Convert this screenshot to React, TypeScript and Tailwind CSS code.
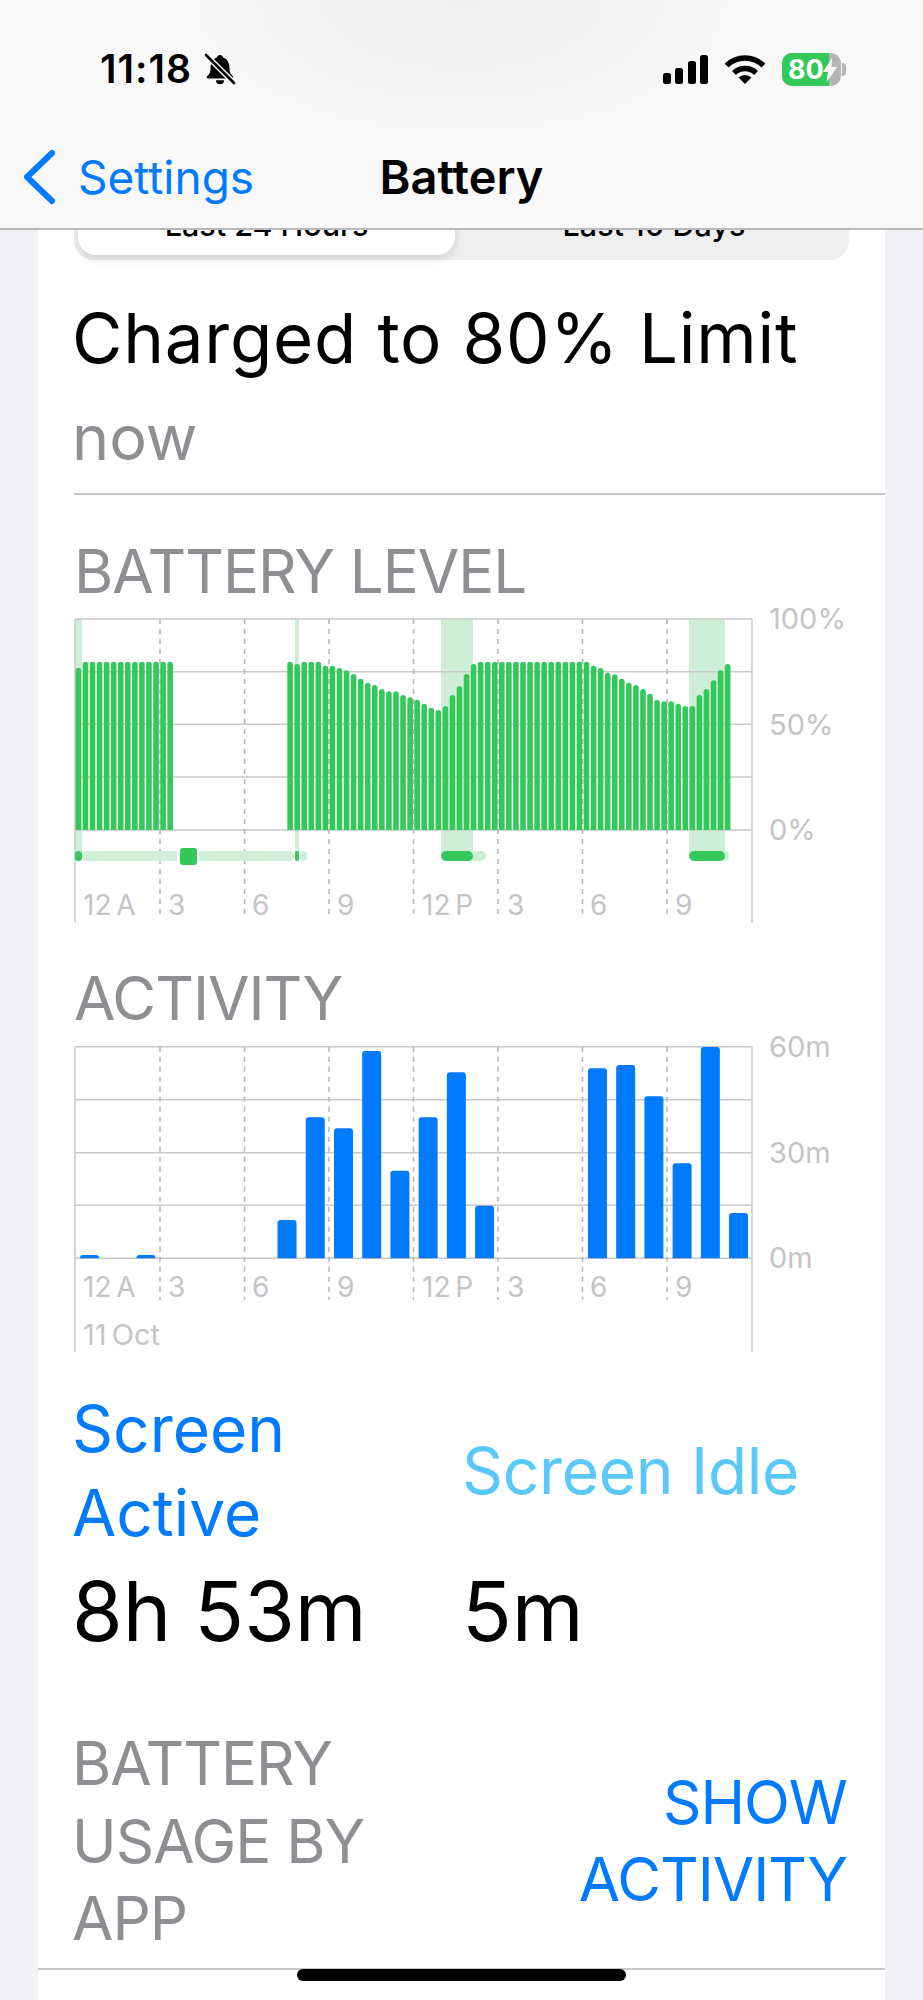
const GREEN = '#34c759';
const LIGHT_GREEN = '#ceefd6';
const BLUE = '#007aff';
const GRID = '#c9c9cb';
const DASH = '#b4b4b7';
const LABEL = '#c4c4c6';

// top edge of each battery bar, in page pixels (null = phone was off)
const levelTops: (number | null)[] = [
  203, 185, 185, 185, 185, 185, 185, 185, 185, 185, 185, 185, 185, 185,
  null, null, null, null, null, null, null, null, null, null, null, null, null, null, null, null,
  185, 192, 185, 185, 185, 197, 197, 204, 211, 222, 236, 248, 255, 267, 274, 274, 285, 292, 299, 311, 323, 330, 318, 285, 259, 222,
  192, 185, 185, 185, 185, 185, 185, 185, 185, 185, 185, 185, 185, 185, 185, 185, 185,
  197, 204, 218, 223, 236, 248, 255, 267, 281, 300, 304, 304, 311, 318, 318, 285, 267, 241, 211, 192,
].map((v) => (v === null ? null : 600 + v / 3));

// index into the 24 hour slots, top edge of the bar
const activityBars: [number, number][] = [
  [0, 675], [2, 675], [7, 570], [8, 262], [9, 295], [10, 63], [11, 422], [12, 262], [13, 127], [14, 527],
  [18, 115], [19, 105], [20, 199], [21, 400], [22, 51], [23, 549],
];

const hours = [160, 244.5, 329, 413.5, 498, 582.5, 667];
const hourLabels: [string, number][] = [
  ['12 A', 83], ['3', 168], ['6', 252], ['9', 337], ['12 P', 422], ['3', 507], ['6', 590], ['9', 675],
];

function ChartFrame({ top, bottom, end, dashEnd, grids }: { top: number; bottom: number; end: number; dashEnd: number; grids: number[] }) {
  return (
    <g>
      {[top, ...grids, bottom].map((y) => (
        <line key={y} x1={75} x2={752} y1={y} y2={y} stroke={GRID} strokeWidth={1.5} />
      ))}
      <line x1={75} x2={75} y1={top} y2={end} stroke={GRID} strokeWidth={1.5} />
      <line x1={752} x2={752} y1={top} y2={end} stroke={GRID} strokeWidth={1.5} />
      {hours.map((x) => (
        <line key={x} x1={x} x2={x} y1={top} y2={dashEnd} stroke={DASH} strokeWidth={1.5} strokeDasharray="5 5" />
      ))}
    </g>
  );
}

function ChartText({ x, y, size = 28, children }: { x: number; y: number; size?: number; children: string }) {
  return (
    <text x={x} y={y} fill={LABEL} fontSize={size} wordSpacing={-3} fontFamily="Inter, sans-serif">
      {children}
    </text>
  );
}

function BatteryChart() {
  return (
    <svg viewBox="74 601 811 329" className="block w-[811px] h-[329px]">
      <rect x={75} y={619} width={7} height={237} fill={LIGHT_GREEN} />
      <rect x={295} y={619} width={4} height={237} fill={LIGHT_GREEN} />
      <rect x={441} y={619} width={32} height={237} fill={LIGHT_GREEN} />
      <rect x={689} y={619} width={36} height={237} fill={LIGHT_GREEN} />
      <ChartFrame top={619} bottom={830} end={923} dashEnd={919} grids={[671.7, 724.3, 777]} />
      {levelTops.map((t, i) =>
        t === null ? null : (
          <path
            key={i}
            d={`M${75.6 + 7.057 * i} 830V${t + 2.8}a2.8 2.8 0 0 1 5.6 0V830z`}
            fill={GREEN}
          />
        ),
      )}
      {/* charging strip */}
      <rect x={82} y={851} width={212} height={10} rx={5} fill={LIGHT_GREEN} />
      <rect x={300} y={851} width={7} height={10} rx={4} fill={LIGHT_GREEN} />
      <rect x={466} y={851} width={20} height={10} rx={5} fill={LIGHT_GREEN} />
      <rect x={720} y={851} width={9} height={10} rx={4} fill={LIGHT_GREEN} />
      <rect x={75} y={851} width={7} height={10} rx={3.5} fill={GREEN} />
      <rect x={295} y={851} width={4} height={10} rx={2} fill={GREEN} />
      <rect x={441} y={851} width={32} height={10} rx={5} fill={GREEN} />
      <rect x={689} y={851} width={36} height={10} rx={5} fill={GREEN} />
      <rect x={177} y={845} width={22} height={22} fill="#fff" />
      <rect x={180} y={848} width={17} height={17} rx={3} fill={GREEN} />
      {hourLabels.map(([t, x]) => (
        <ChartText key={x} x={x} y={915}>{t}</ChartText>
      ))}
      <ChartText x={769} y={629} size={29}>100%</ChartText>
      <ChartText x={769} y={735} size={29}>50%</ChartText>
      <ChartText x={769} y={840} size={29}>0%</ChartText>
    </svg>
  );
}

function ActivityChart() {
  return (
    <svg viewBox="74 1028 811 332" className="block w-[811px] h-[332px]">
      <ChartFrame top={1046.7} bottom={1258.3} end={1352} dashEnd={1300} grids={[1099.7, 1152.7, 1205.3]} />
      {activityBars.map(([i, top]) => {
        const x = 80 + 28.22 * i;
        const y = 1030 + top / 3;
        const r = Math.min(3, 1258.3 - y);
        return (
          <path
            key={i}
            d={`M${x} 1258.3V${y + r}a${r} ${r} 0 0 1 ${r} ${-r}h${19 - 2 * r}a${r} ${r} 0 0 1 ${r} ${r}V1258.3z`}
            fill={BLUE}
          />
        );
      })}
      {hourLabels.map(([t, x]) => (
        <ChartText key={x} x={x} y={1297}>{t}</ChartText>
      ))}
      <ChartText x={83} y={1345} size={29}>11 Oct</ChartText>
      <ChartText x={769} y={1057} size={29}>60m</ChartText>
      <ChartText x={769} y={1163} size={29}>30m</ChartText>
      <ChartText x={769} y={1268} size={29}>0m</ChartText>
    </svg>
  );
}

function BellSlash() {
  return (
    <svg viewBox="0 0 32 32" className="w-[32px] h-[32px]">
      <path d="M16 2c-1.7 0-2.8 1.1-3 2.6C8.2 6 6.5 10.5 6.5 16c0 3-.9 5-3.3 7.2-.9.9-.3 2.3 1 2.3h23.6c1.3 0 1.9-1.4 1-2.3-2.4-2.2-3.3-4.2-3.3-7.2 0-5.5-1.7-10-6.5-11.4C18.8 3.1 17.7 2 16 2z" fill="#000" />
      <path d="M12 27.2a4 4 0 0 0 8 0z" fill="#000" />
      <line x1={1} y1={1} x2={31} y2={31} stroke="#f8f8f8" strokeWidth={5.5} />
      <line x1={2} y1={2} x2={30} y2={30} stroke="#000" strokeWidth={2.6} strokeLinecap="round" />
    </svg>
  );
}

function Signal() {
  return (
    <div className="flex items-end gap-[4.5px] h-[29px]">
      <div className="w-[8px] h-[11px] rounded-[2.5px] bg-black" />
      <div className="w-[8px] h-[16px] rounded-[2.5px] bg-black" />
      <div className="w-[8px] h-[23px] rounded-[2.5px] bg-black" />
      <div className="w-[8px] h-[29px] rounded-[2.5px] bg-black" />
    </div>
  );
}

function Wifi() {
  return (
    <svg viewBox="0 0 40 29" className="w-[40px] h-[29px]">
      <path d="M20 29L13.6 22.6A9 9 0 0 1 26.4 22.6z" fill="#000" />
      <path d="M9 18A15.5 15.5 0 0 1 31 18" fill="none" stroke="#000" strokeWidth={5.5} />
      <path d="M1.6 10.6A26 26 0 0 1 38.4 10.6" fill="none" stroke="#000" strokeWidth={5.5} />
    </svg>
  );
}

function BatteryIcon() {
  return (
    <div className="flex items-center">
      <div className="relative flex w-[59px] h-[33px] rounded-[10px] overflow-hidden bg-[#b5b5b5]">
        <div className="w-[47px] bg-[#34c759] flex items-center pl-[6px] text-white text-[27px] font-bold leading-none">
          80
        </div>
        <svg viewBox="0 0 14 24" className="absolute left-[41px] top-[5px] w-[14px] h-[24px]">
          <path d="M9 0L0 14h5L3.5 24 14 9H8.5z" fill="#fff" />
        </svg>
      </div>
      <div className="ml-[1px] w-[4px] h-[13px] rounded-r-full bg-[#b5b5b5]" />
    </div>
  );
}

function NavBar() {
  return (
    <header className="relative z-10 h-[230px] border-b-2 border-[#b8b8ba] bg-[radial-gradient(ellipse_at_50%_0%,_#efefef_0%,_#f8f8f8_45%,_#f9f9f9_100%)]">
      <div className="flex items-center justify-between pt-[49px] pl-[100px] pr-[77px] h-[89px]">
        <div className="flex items-center gap-[12px]">
          <span className="text-[39px] leading-[40px] font-semibold tracking-[1px] text-black">11:18</span>
          <BellSlash />
        </div>
        <div className="flex items-center gap-[17px]">
          <Signal />
          <Wifi />
          <BatteryIcon />
        </div>
      </div>
      <div className="mt-[60px] grid grid-cols-[1fr_auto_1fr] items-center h-[50px]">
        <div className="flex items-center pl-[22px]">
          <svg viewBox="0 0 34 56" className="w-[34px] h-[56px]">
            <polyline points="30,4 5,28 30,52" fill="none" stroke={BLUE} strokeWidth={6} strokeLinecap="round" strokeLinejoin="round" />
          </svg>
          <span className="ml-[22px] text-[46px] leading-[50px] text-[#007aff]">Settings</span>
        </div>
        <span className="text-[47px] leading-[50px] font-semibold text-black">Battery</span>
        <div />
      </div>
    </header>
  );
}

export default function App() {
  return (
    <div className="relative flex flex-col w-[923px] h-[2000px] overflow-hidden bg-[#f2f2f7] font-['Inter',sans-serif]">
      <NavBar />
      <main className="flex-1 mx-[38px] -mt-[39px] bg-white pl-[36px]">
        {/* Segmented control, mostly scrolled under the nav bar */}
        <div className="mr-[36px] h-[69px] rounded-b-[20px] bg-[#eeeeef] p-[4px] pb-[5px] flex text-[30.5px] font-medium text-black">
          <div className="w-[377px] rounded-[18px] bg-white shadow-[0_4px_8px_rgba(0,0,0,0.12)] flex items-center justify-center">
            Last 24 Hours
          </div>
          <div className="flex-1 flex items-center justify-center pl-[8px]">Last 10 Days</div>
        </div>

        <h1 className="mt-[38px] -ml-[2px] text-[69px] leading-[80px] font-normal text-black tracking-[0.8px]">Charged to 80% Limit</h1>
        <p className="mt-[19px] -ml-[2px] text-[63px] leading-[80px] text-[#8e8e93]">now</p>
        <div className="mt-[16px] h-[2px] bg-[#c6c6c8]" />

        <h2 className="mt-[46px] text-[60px] leading-[60px] tracking-[-1px] text-[#8e8e93]">BATTERY LEVEL</h2>
        <BatteryChart />

        <h2 className="mt-[38px] text-[60px] leading-[60px] tracking-[-1px] text-[#8e8e93]">ACTIVITY</h2>
        <ActivityChart />

        <div className="mt-[27px] -ml-[2px] grid grid-cols-[390px_1fr]">
          <div className="w-[260px] text-[64px] leading-[84px] text-[#007aff]">Screen Active</div>
          <div className="self-center text-[64px] leading-[84px] tracking-[-0.3px] text-[#5ac8fa]">Screen Idle</div>
          <div className="mt-[12px] text-[82px] leading-[90px] text-black">8h 53m</div>
          <div className="mt-[12px] text-[82px] leading-[90px] text-black">5m</div>
        </div>

        <div className="mt-[68px] -ml-[2px] flex items-center justify-between pr-[38px]">
          <div className="w-[340px] text-[60px] leading-[77.5px] tracking-[-1px] text-[#8e8e93]">BATTERY USAGE BY APP</div>
          <div className="w-[300px] text-right text-[60px] leading-[77px] tracking-[-1px] text-[#007aff]">SHOW ACTIVITY</div>
        </div>
        <div className="-ml-[36px] mt-[10px] h-[2px] bg-[#c6c6c8]" />
      </main>
      <div className="absolute left-[297px] top-[1969px] w-[329px] h-[12px] rounded-full bg-black" />
    </div>
  );
}
